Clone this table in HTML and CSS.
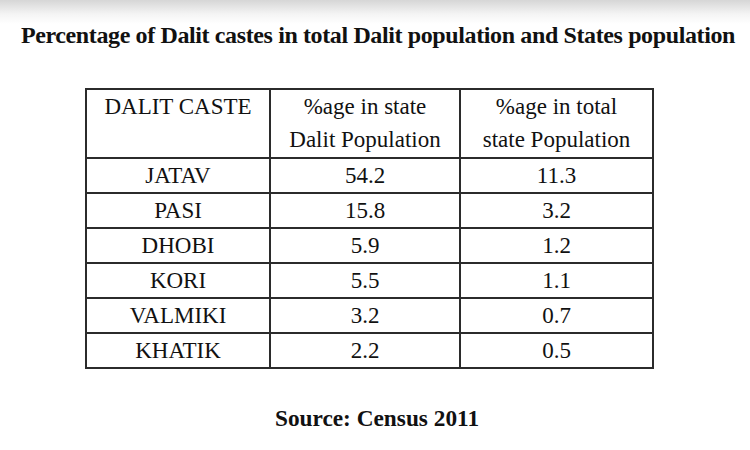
FILE: index.html
```html
<!DOCTYPE html>
<html lang="en">
<head>
<meta charset="utf-8">
<title>Dalit castes</title>
<link rel="stylesheet" href="styles.css">
</head>
<body>
<div class="page">
  <h1 class="title">Percentage of Dalit castes in total Dalit population and States population</h1>
  <table class="data">
    <colgroup>
      <col class="c1"><col class="c2"><col class="c3">
    </colgroup>
    <thead>
      <tr>
        <th>DALIT CASTE</th>
        <th>%age in state<br>Dalit Population</th>
        <th>%age in total<br>state Population</th>
      </tr>
    </thead>
    <tbody>
      <tr><td>JATAV</td><td>54.2</td><td>11.3</td></tr>
      <tr><td>PASI</td><td>15.8</td><td>3.2</td></tr>
      <tr><td>DHOBI</td><td>5.9</td><td>1.2</td></tr>
      <tr><td>KORI</td><td>5.5</td><td>1.1</td></tr>
      <tr><td>VALMIKI</td><td>3.2</td><td>0.7</td></tr>
      <tr><td>KHATIK</td><td>2.2</td><td>0.5</td></tr>
    </tbody>
  </table>
  <p class="source">Source: Census 2011</p>
</div>
</body>
</html>
```
FILE: styles.css
```css
html, body {
  margin: 0;
  padding: 0;
  background: #fff;
}
body {
  width: 750px;
  height: 450px;
  overflow: hidden;
  font-family: "Liberation Serif", "Times New Roman", serif;
  color: #111;
  background: linear-gradient(to bottom, #d6d6d6 0px, #f4f4f4 14px, #ffffff 24px);
}
.page {
  display: flex;
  flex-direction: column;
  padding-top: 20px;
}
.title {
  margin: 0;
  font-size: 24px;
  line-height: 30px;
  font-weight: bold;
  text-align: center;
  white-space: nowrap;
  letter-spacing: -0.38px;
  padding-left: 6px;
}
.data {
  margin: 38px 0 0 85px;
  width: 567px;
  border-collapse: collapse;
  table-layout: fixed;
  font-size: 23px;
  line-height: 33px;
}
.c1 { width: 184px; }
.c2 { width: 190px; }
.c3 { width: 193px; }
.data th,
.data td {
  border: 2px solid #2b2b2b;
  padding: 0;
  text-align: center;
  font-weight: normal;
  vertical-align: top;
}
.data th {
  height: 67px;
}
.data td {
  height: 33px;
}
.source {
  margin: 34px 0 0;
  font-size: 23.3px;
  line-height: 30px;
  font-weight: bold;
  text-align: center;
  padding-left: 4px;
}
```
